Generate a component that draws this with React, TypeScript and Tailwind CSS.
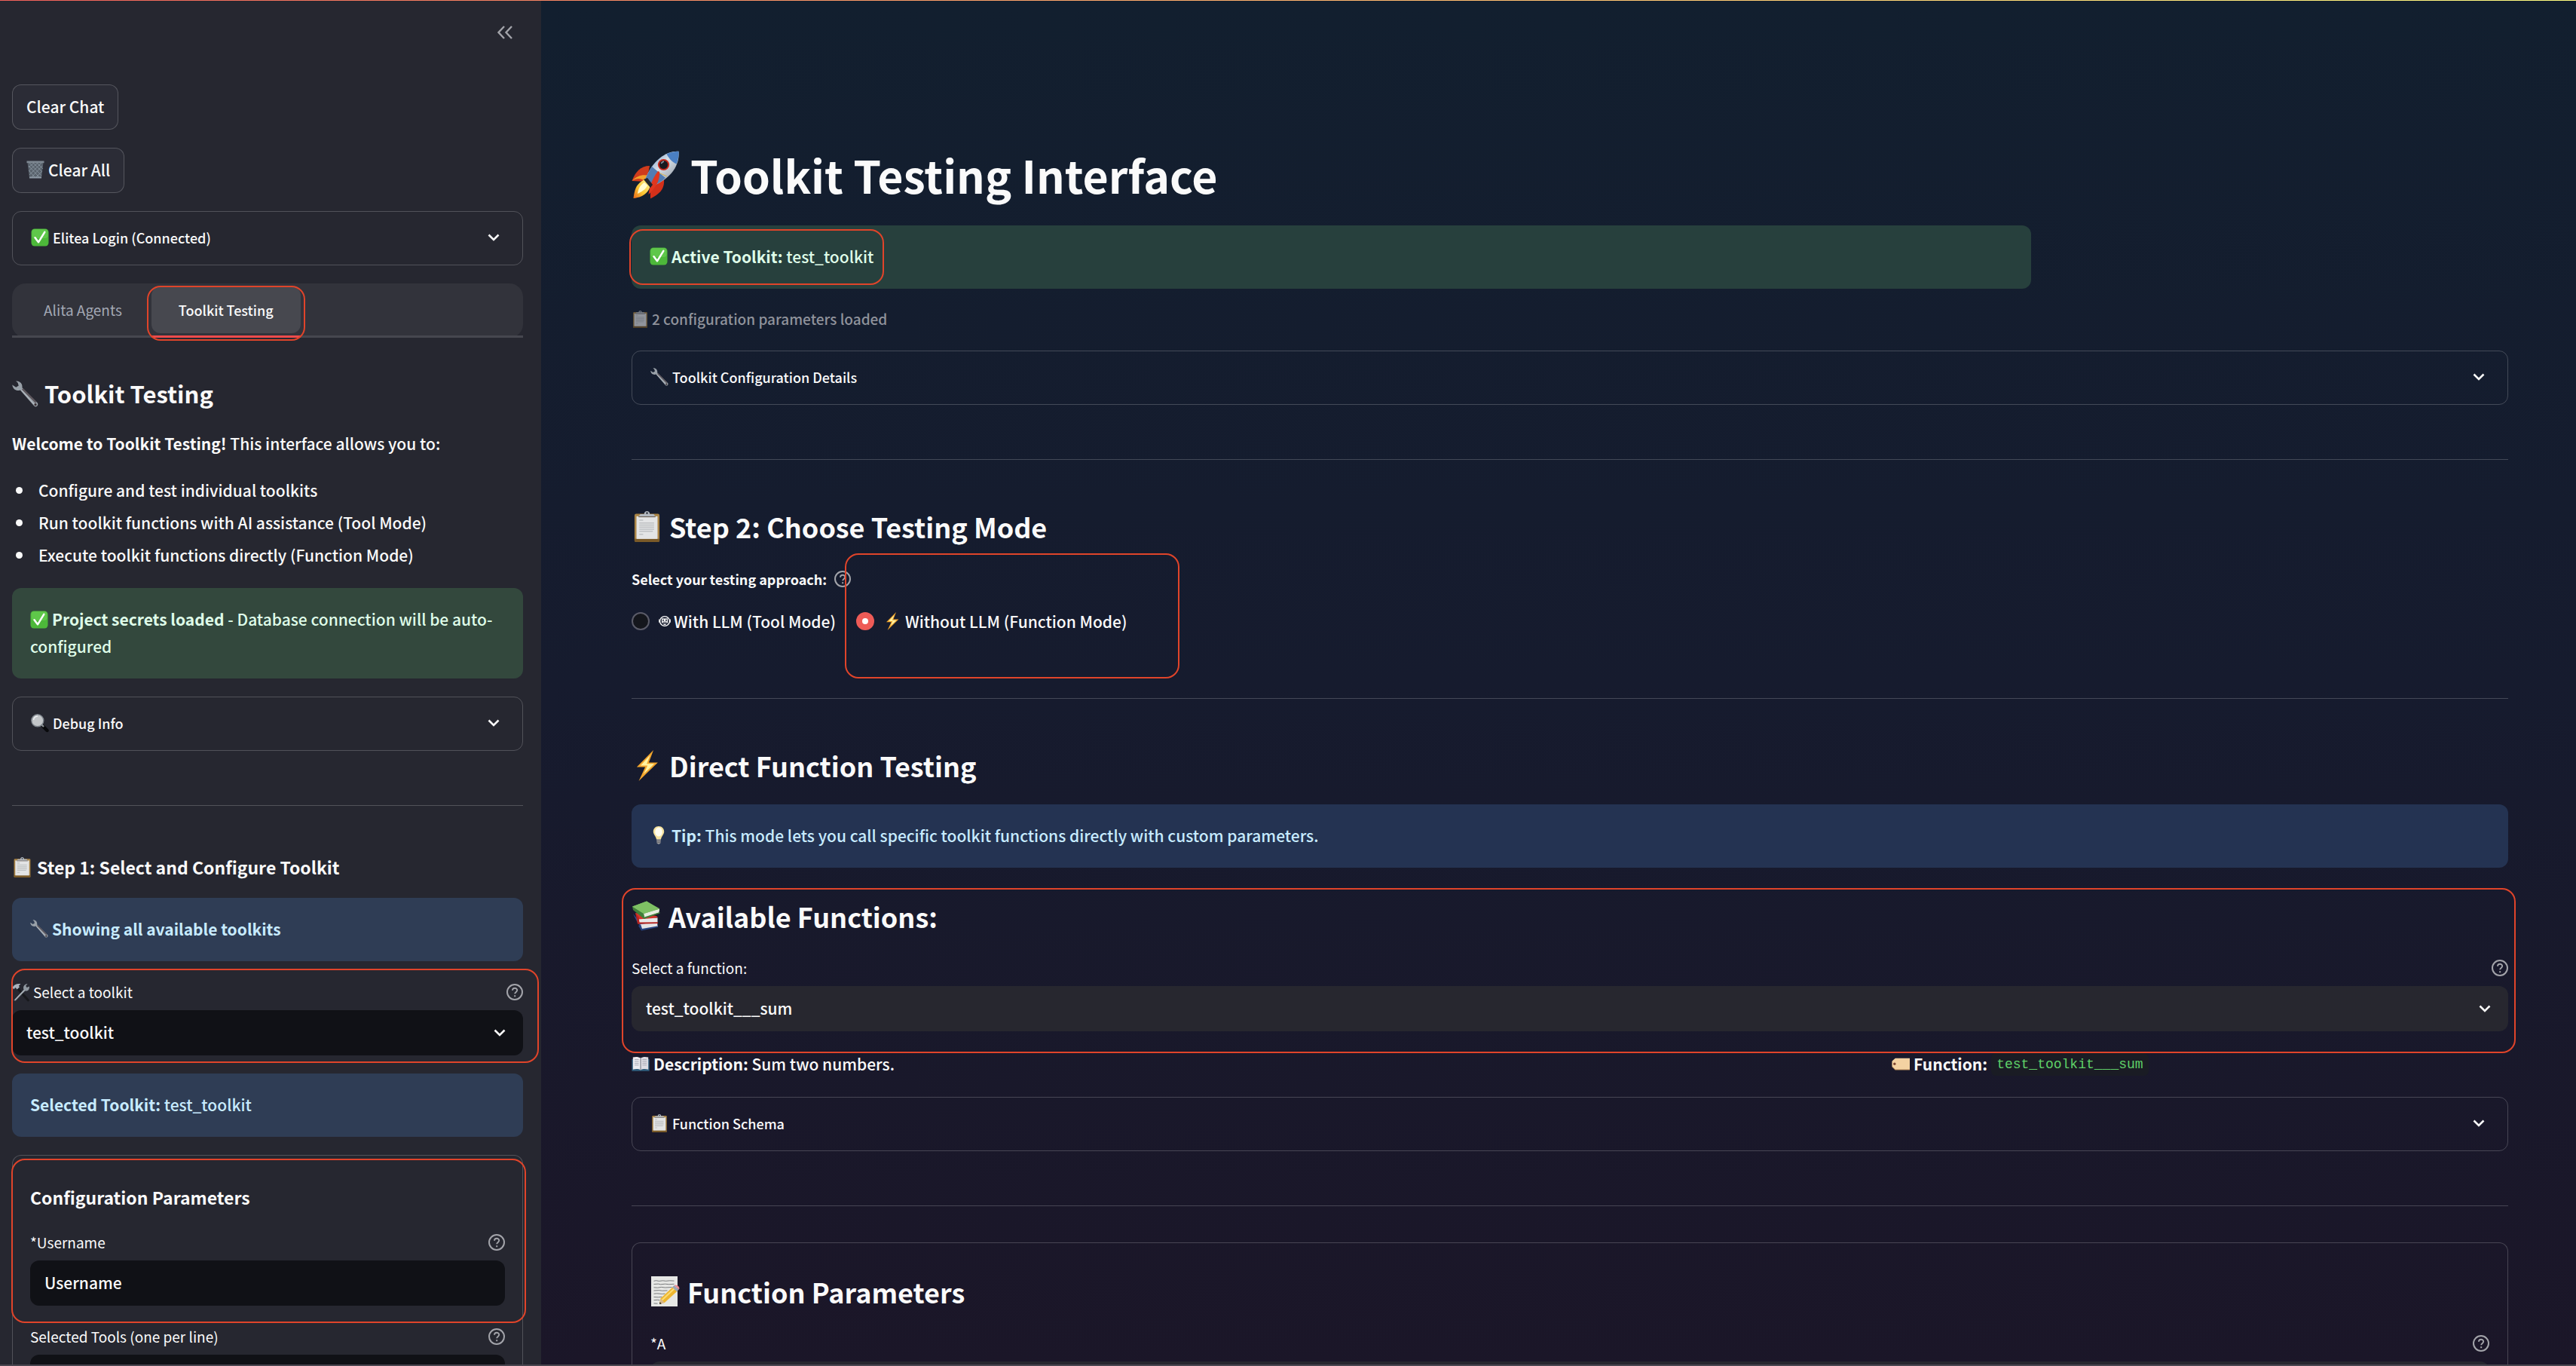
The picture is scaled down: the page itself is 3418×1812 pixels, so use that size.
import React, { useState } from "react";

type IconProps = { className?: string };

const glyph = "inline-block shrink-0 overflow-visible align-middle";

function Check({ className = "size-6" }: IconProps) {
  return (
    <svg viewBox="0 0 24 24" className={`${glyph} ${className}`} aria-hidden="true">
      <rect x="0.5" y="0.5" width="23" height="23" rx="4.5" fill="#4db83a" />
      <rect x="1.5" y="1" width="21" height="12" rx="4" fill="#6fd358" opacity="0.55" />
      <path d="M5.5 12.2 L10 18.3 L18.3 4.8" fill="none" stroke="#fff" strokeWidth="2.5" strokeLinecap="round" strokeLinejoin="round" />
    </svg>
  );
}

function Trash({ className = "size-6" }: IconProps) {
  return (
    <svg viewBox="0 0 24 24" className={`${glyph} ${className}`} aria-hidden="true">
      <path d="M1.5 2.5 L4 23 H20 L22.5 2.5 Z" fill="#59626c" />
      <path d="M3 7l14 15M4 14l8 9M4 3l16 17M9 3l12 12M14 3l8 8M21 7L7 22M20 15l-8 8M20 3L4 19M15 3L3 14M10 3L3 9" stroke="#8d99a5" strokeWidth="0.8" fill="none" />
      <path d="M4 21.5 H20 V23.5 H4 Z" fill="#8e9aa6" />
      <path d="M0.5 0.5 H23.5 V3.2 H0.5 Z" fill="#7d8791" />
    </svg>
  );
}

function Wrench({ className = "size-6" }: IconProps) {
  return (
    <svg viewBox="0 0 24 24" className={`${glyph} ${className}`} aria-hidden="true">
      <path d="M3.5 0.3 C6.5 0 9.8 2.2 9.2 6.4 L23 20 C24.6 22 22.2 24.6 20.2 23.2 L7.4 8.6 C4.6 9.8 0.6 8.2 0.2 3.8 L3.6 6 L6 4.4 L5.2 1.9 Z" fill="#98a0a8" />
      <path d="M9.5 7.5 L21.8 19.8" stroke="#5c555b" strokeWidth="1.6" />
      <path d="M8.6 8.6 L20 21.4" stroke="#c4c9cf" strokeWidth="0.6" />
      <circle cx="21.3" cy="21.7" r="1.1" fill="#3a2f33" />
    </svg>
  );
}

function Magnifier({ className = "size-6" }: IconProps) {
  return (
    <svg viewBox="0 0 24 24" className={`${glyph} ${className}`} aria-hidden="true">
      <path d="M16 16.4 L21.6 22" stroke="#08090b" strokeWidth="4.4" strokeLinecap="round" />
      <path d="M14 14 L17 17" stroke="#8b9097" strokeWidth="2.4" />
      <circle cx="8.8" cy="8.8" r="8" fill="#c3c6c9" stroke="#7e858c" strokeWidth="1.4" />
      <path d="M3.5 8 A6 6 0 0 1 9 3" stroke="#eceef0" strokeWidth="1.4" fill="none" />
    </svg>
  );
}

function Clipboard({ className = "size-6" }: IconProps) {
  return (
    <svg viewBox="0 0 24 24" className={`${glyph} ${className}`} aria-hidden="true">
      <rect x="2.3" y="2" width="19.4" height="22" rx="1.3" fill="#a98446" />
      <rect x="2.3" y="21.4" width="19.4" height="2.6" rx="1" fill="#7a5a28" />
      <rect x="3.8" y="4" width="16.4" height="17.6" fill="#e3e4e5" />
      <path d="M6 7h3M6 9.2h11.5M6 10.8h11.5M6 12.4h11.5M6 14h11.5M6 15.6h10.5M6 18h3" stroke="#bfc1c4" strokeWidth="0.9" />
      <path d="M5.4 4.4 L6.8 2.4 H9.8 C9.8 -0.8 14.2 -0.8 14.2 2.4 H17.2 L18.6 4.4 Z" fill="#b4bac2" />
      <circle cx="12" cy="1.6" r="0.8" fill="#3a3f48" />
      <path d="M5.4 4.4H18.6" stroke="#6d6257" strokeWidth="0.7" />
    </svg>
  );
}

function HammerWrench({ className = "size-6" }: IconProps) {
  return (
    <svg viewBox="0 0 24 24" className={`${glyph} ${className}`} aria-hidden="true">
      <path d="M6.5 6 L21.5 23" stroke="#17181c" strokeWidth="3" strokeLinecap="round" />
      <path d="M0.5 6 C2.5 2 6 0.4 11.5 1 L9 3.4 L9.8 5.6 L6.6 8.4 L4.6 6 L2.2 8.2 Z" fill="#a9b2bd" />
      <path d="M2.3 23 L15.5 8.8 C14 4.6 16.6 1.2 20.6 1 L18.2 3.8 L19.6 6 L22.8 4.4 C23.6 8.4 20.6 11.2 17.2 10.4 L4.6 23.6 Z" fill="#8f979f" />
      <path d="M4 22 L16.4 9.4" stroke="#c9ced4" strokeWidth="0.7" />
    </svg>
  );
}

function Rocket({ className = "size-16" }: IconProps) {
  return (
    <svg viewBox="0 0 64 64" className={`${glyph} ${className}`} aria-hidden="true">
      <defs>
        <linearGradient id="hull" x1="0" y1="0" x2="1" y2="1">
          <stop offset="0" stopColor="#4d83c4" />
          <stop offset="0.45" stopColor="#d9dfe6" />
          <stop offset="1" stopColor="#7e8894" />
        </linearGradient>
        <linearGradient id="flame" x1="1" y1="0" x2="0" y2="1">
          <stop offset="0" stopColor="#fff6a0" />
          <stop offset="0.6" stopColor="#fbc531" />
          <stop offset="1" stopColor="#e8661b" />
        </linearGradient>
      </defs>
      <path d="M24 20 C12 20 5 28 0.5 40 L20 41 Z" fill="#cf3b1c" />
      <path d="M0.5 40 C7 36 12 36 20 41 L23 33 C15 31 7 33 0.5 40 Z" fill="#f3a02a" />
      <path d="M43 38 C44 50 38 57 25 63.5 L25 45 Z" fill="#d4301a" />
      <path d="M20 37 C7 42 4 50 2.5 63 C12 62 22 58 25 46 Z" fill="url(#flame)" />
      <path d="M17 42 C11 46 9 50 8 57 C14 54 19 51 21 46 Z" fill="#fffbd0" />
      <path d="M62.5 0.8 C46 0 28 12 18 38 L28 47 C54 36 64 18 62.5 0.8 Z" fill="url(#hull)" />
      <path d="M62.5 0.8 C57 0.8 51 2 46.5 4.2 C50 11 54 15 59.5 17.5 C62 12 63 6 62.5 0.8 Z" fill="#4a7fc3" />
      <path d="M27 21 C23 27 20 33 18 38 L28 47 C34 44 40 41 45 36 Z" fill="#527cb3" />
      <path d="M36 29 L47 34" stroke="#d8b24a" strokeWidth="1" />
      <path d="M35 27 C27 38 24 47 22.5 58 C31 50 38 40 37 28 Z" fill="#e0371f" />
      <circle cx="42.5" cy="18.5" r="7.6" fill="#c6281c" />
      <circle cx="42.5" cy="18.5" r="5.6" fill="#17191f" />
      <path d="M39.5 17 A4 4 0 0 1 43 14.2" stroke="#8d98a8" strokeWidth="1.4" fill="none" />
      <path d="M16 38 L21 36 L28 45 L25 49 Z" fill="#20242c" />
    </svg>
  );
}

function Bolt({ className = "size-6" }: IconProps) {
  return (
    <svg viewBox="0 0 24 24" className={`${glyph} ${className}`} aria-hidden="true">
      <path d="M17 0 L4 13.2 H10.6 L5.6 24 L20.4 9.6 H13.4 Z" fill="#f2a52c" />
      <path d="M14.4 4 L7 12 H12.4 L9.4 18.6 L17.6 10.7 H11.8 Z" fill="#fff2a0" />
    </svg>
  );
}

function Bulb({ className = "size-6" }: IconProps) {
  return (
    <svg viewBox="0 0 24 24" className={`${glyph} ${className}`} aria-hidden="true">
      <path d="M12 0 C7.5 0 4.8 3.4 4.8 7 C4.8 11 8.6 13.4 9 17.6 H15 C15.4 13.4 19.2 11 19.2 7 C19.2 3.4 16.5 0 12 0 Z" fill="#f6e29c" />
      <ellipse cx="12" cy="7.6" rx="4.8" ry="6" fill="#fffdf0" />
      <path d="M9.2 17.4 H14.8 L14.4 22.4 L12 24 L9.6 22.4 Z" fill="#9b9c9f" />
      <path d="M9.4 19.4h5.2M9.6 21.4h4.8" stroke="#55565a" strokeWidth="0.8" />
    </svg>
  );
}

function Books({ className = "size-10" }: IconProps) {
  return (
    <svg viewBox="0 0 40 40" className={`${glyph} ${className}`} aria-hidden="true">
      <path d="M2 17 L8 29 L14 36 L35 34 L33 25 L10 27 Z" fill="#2c4f9e" />
      <path d="M11 31 L34 28 L34.5 34.5 L14 38.5 Z" fill="#e4e4e6" />
      <path d="M9 33 L13 39.5 L35 35 L34 33.6 L14 37 L12 31 Z" fill="#27427f" />
      <path d="M5 16 L33 20 L35 22 L9 27 Z" fill="#d1352b" />
      <path d="M9 24.5 L34.5 22.5 L34.5 28.5 L10.5 30 Z" fill="#e9e9ea" />
      <path d="M5 16 L8 30.8 L35 30 L35 28.2 L10.5 28.6 L9.5 22 Z" fill="#b4231f" />
      <path d="M1 7.5 L20 0.5 L37.5 12.5 L16 22 Z" fill="#67ae52" />
      <path d="M16 17 L37 10.5 L36.5 15.5 L17 22.5 Z" fill="#e7ecdf" />
      <path d="M1 7.5 L2 12 L16.5 24 L37.5 16.5 L37.5 15 L17 21.6 L16 16.6 Z" fill="#40803a" />
      <path d="M1 7.5 L20 0.5 L37.5 10.5 L16 17 Z" fill="#7ec064" />
    </svg>
  );
}

function OpenBook({ className = "size-6" }: IconProps) {
  return (
    <svg viewBox="0 0 24 24" className={`${glyph} ${className}`} aria-hidden="true">
      <path d="M0.4 5 H23.6 V20.8 H0.4 Z" fill="#2f5d7c" />
      <path d="M1.8 2.6 C5 1.6 9.6 1.8 12 3.6 V19.4 C9.6 17.8 5 17.8 1.8 18.8 Z" fill="#ececf0" />
      <path d="M22.2 2.6 C19 1.6 14.4 1.8 12 3.6 V19.4 C14.4 17.8 19 17.8 22.2 18.8 Z" fill="#dcdce3" />
      <path d="M4 5.6h5.6M4 8h5.6M4 10.4h5.6M4 12.8h5.6M14.4 5.6H20M14.4 8H20M14.4 10.4H20M14.4 12.8H20" stroke="#a9abb6" strokeWidth="1" />
      <path d="M12 3.6V19.6" stroke="#6a6e7c" strokeWidth="1" />
    </svg>
  );
}

function Tag({ className = "size-6" }: IconProps) {
  return (
    <svg viewBox="0 0 24 24" className={`${glyph} ${className}`} aria-hidden="true">
      <path d="M4.6 4.4 H24 V19.4 H4.6 L0.6 15.6 V8.2 Z" fill="#b88b5a" />
      <path d="M4.8 3.8 H24 V18.4 H4.8 L0.6 14.6 V7.6 Z" fill="#f3d2a2" />
      <circle cx="3.8" cy="11.2" r="1.7" fill="#7d4632" />
    </svg>
  );
}

function Memo({ className = "size-10" }: IconProps) {
  return (
    <svg viewBox="0 0 40 40" className={`${glyph} ${className}`} aria-hidden="true">
      <rect x="1" y="0" width="35" height="40" fill="#e6e7e5" />
      <path d="M4.5 6.3l3-.6 4 .7 5-.6 4 .5 5-.5 6 .3M4.5 10.5l6-.4 3 .7 6-.6 5 .5 7-.4M4.5 14.8l5 .4 5-.8 5 .6 9-.5M4.5 19l7-.4 4 .6 7-.3M4.5 23.2l4-.4 7 .6 4-.3M4.5 27.5l6 .3 5-.5M4.5 31.7l5-.4 3 .5M4.5 35.9l5 .3" stroke="#6d6f72" strokeWidth="0.9" fill="none" />
      <path d="M12 37 L13.4 29.6 L30.4 13.4 L36.4 19 L18.8 35 Z" fill="#eeb62f" />
      <path d="M15.5 31.6 L32.6 15.4" stroke="#fbdc74" strokeWidth="2" />
      <path d="M12 37 L13.4 29.6 L18.8 35 Z" fill="#d9b98c" />
      <path d="M12 37 L12.6 34 L14.8 36.2 Z" fill="#2b2725" />
      <path d="M29 14.6 L31.6 12 L37.8 17.6 L35 20.2 Z" fill="#9aa7b5" />
      <path d="M31.6 12 C34 9.8 40.4 14.4 37.8 17.6 Z" fill="#ea8c93" />
    </svg>
  );
}

function Robot({ className = "size-4" }: IconProps) {
  return (
    <svg viewBox="0 0 16 16" className={`${glyph} ${className}`} aria-hidden="true">
      <circle cx="8" cy="8" r="6.4" fill="none" stroke="#fafafa" strokeWidth="1.4" />
      <path d="M0.8 5.6v4.2M15.2 5.6v4.2" stroke="#fafafa" strokeWidth="1.3" />
      <path d="M4 4.4 H12 V10.4 H4 Z" fill="#fafafa" />
      <circle cx="6" cy="6.8" r="1" fill="#161b2e" />
      <circle cx="10" cy="6.8" r="1" fill="#161b2e" />
      <path d="M5.4 9.2h5.2" stroke="#161b2e" strokeWidth="0.8" />
      <path d="M6.4 12.4h3.2" stroke="#fafafa" strokeWidth="1.4" />
    </svg>
  );
}

function Chevron({ className = "" }: IconProps) {
  return (
    <svg viewBox="0 0 16 10" className={`h-[10px] w-4 shrink-0 ${className}`} aria-hidden="true">
      <path d="M1.5 1.5 L8 8 L14.5 1.5" fill="none" stroke="#fafafa" strokeWidth="2.6" />
    </svg>
  );
}

function Help({ label }: { label: string }) {
  return (
    <button type="button" aria-label={label} className="size-[22px] shrink-0">
      <svg viewBox="0 0 22 22" className="size-[22px]" fill="none" stroke="#a3a4aa" aria-hidden="true">
        <circle cx="11" cy="11" r="10" strokeWidth="2" />
        <path d="M8 8.8 C8 4.8 14.2 4.9 14.2 8.6 C14.2 10.9 11.2 10.9 11.2 13.2" strokeWidth="1.9" />
        <path d="M11.2 15.2 V17.2" strokeWidth="2" />
      </svg>
    </button>
  );
}

function Callout({ className }: { className: string }) {
  return <div aria-hidden="true" className={`pointer-events-none absolute z-10 rounded-[18px] border-2 border-[#e0442a] ${className}`} />;
}

function Expander({ icon, title }: { icon: React.ReactNode; title: string }) {
  return (
    <button type="button" aria-expanded="false" className="flex h-[72px] w-full items-center rounded-xl border border-white/20 pr-[30px] pb-[3px] pl-6 text-left text-[18px] font-medium">
      <span className="mr-[5px] flex">{icon}</span>
      <span className="flex-1">{title}</span>
      <Chevron />
    </button>
  );
}

function SelectBox({ id, value, tone }: { id: string; value: string; tone: string }) {
  return (
    <div className="relative">
      <select id={id} defaultValue={value} className={`h-[60px] w-full appearance-none rounded-xl pr-14 pb-[3px] pl-[19px] leading-9 outline-none ${tone}`}>
        <option>{value}</option>
      </select>
      <Chevron className="pointer-events-none absolute top-[25px] right-[23px]" />
    </div>
  );
}

function FieldLabel({ htmlFor, help, children }: { htmlFor: string; help: string; children: React.ReactNode }) {
  return (
    <div className="mb-[5px] flex h-9 items-center justify-between pb-[2px] text-[19px] font-normal">
      <label htmlFor={htmlFor} className="flex items-center gap-[4px]">
        {children}
      </label>
      <Help label={help} />
    </div>
  );
}

function Heading({ icon, children }: { icon: React.ReactNode; children: React.ReactNode }) {
  return (
    <h2 className="flex items-center gap-[9px] pt-[15px] pb-[3px] text-[36px] leading-[50px] font-bold">
      {icon}
      {children}
    </h2>
  );
}

function Divider() {
  return <hr className="mt-12 mb-6 border-t border-white/20" />;
}

function Sidebar() {
  return (
    <aside className="w-[718px] shrink-0 overflow-hidden bg-[#262730] pr-6 pl-4">
      <div className="flex h-28 items-start justify-end pt-8 pr-[13px]">
        <button type="button" aria-label="Collapse sidebar" className="h-6 w-[22px]">
          <svg viewBox="0 0 22 24" className="h-6 w-[22px]" fill="none" stroke="#a3a4aa" strokeWidth="2.4" aria-hidden="true">
            <path d="M10 3 L2.5 11 L10 19 M20 3 L12.5 11 L20 19" />
          </svg>
        </button>
      </div>
      <div className="flex flex-col items-stretch gap-6">
        <button type="button" className="h-[60px] self-start rounded-xl border border-white/20 bg-[#2b2c36] px-[18px] pb-[2px]">
          Clear Chat
        </button>
        <button type="button" className="flex h-[60px] items-center gap-[5px] self-start rounded-xl border border-white/20 bg-[#2b2c36] px-[18px] pb-[2px]">
          <Trash />
          Clear All
        </button>
        <Expander icon={<Check />} title="Elitea Login (Connected)" />
        <div role="tablist" className="relative flex h-[72px] items-start gap-[3px] rounded-[18px] bg-[#32333b] px-[6px] pt-1">
          <div className="absolute inset-x-0 bottom-0 h-[3px] bg-[#46474f]" />
          <button role="tab" aria-selected="false" type="button" className="h-[62px] px-9 text-[19px] font-normal text-[#a3a8b4]">
            Alita Agents
          </button>
          <div className="relative">
            <button role="tab" aria-selected="true" type="button" className="h-[62px] rounded-xl bg-[#47484f] px-9 text-[18px]">
              Toolkit Testing
            </button>
            <div className="absolute inset-x-0 top-[65px] h-[3px] bg-[#ff4b4b]/90" />
            <Callout className="-inset-x-[6px] -top-[1px] h-[73px]" />
          </div>
        </div>
        <h3 className="flex h-[74px] items-center gap-[8px] pt-[26px] text-[31px] leading-[46px] font-bold">
          <Wrench className="size-[35px]" />
          Toolkit Testing
        </h3>
        <p>
          <strong>Welcome to Toolkit Testing!</strong> This interface allows you to:
        </p>
        <ul className="flex flex-col gap-[7px] py-[2px]">
          {[
            "Configure and test individual toolkits",
            "Run toolkit functions with AI assistance (Tool Mode)",
            "Execute toolkit functions directly (Function Mode)",
          ].map((t) => (
            <li key={t} className="flex items-center">
              <span className="mr-[21px] ml-[5px] size-[9px] rounded-full bg-[#fafafa]" />
              {t}
            </li>
          ))}
        </ul>
        <div role="status" className="rounded-xl bg-[#33483d] px-6 pt-[23px] pb-[25px] text-[#dffde9]">
          <Check className="-mt-[5px] mr-[5px] size-6" />
          <strong>Project secrets loaded</strong> - Database connection will be auto-configured
        </div>
        <Expander icon={<Magnifier />} title="Debug Info" />
        <Divider />
        <h4 className="flex items-center gap-[6px] pt-4 text-[23px] leading-[34px] font-bold">
          <Clipboard className="size-[27px]" />
          Step 1: Select and Configure Toolkit
        </h4>
        <div role="status" className="flex items-center gap-[5px] rounded-xl bg-[#2f3d55] px-6 pt-[23px] pb-[25px] font-bold text-[#c7ebff]">
          <Wrench />
          Showing all available toolkits
        </div>
        <div className="relative">
          <FieldLabel htmlFor="toolkit" help="About toolkits">
            <HammerWrench />
            Select a toolkit
          </FieldLabel>
          <SelectBox id="toolkit" value="test_toolkit" tone="bg-[#101116]" />
          <Callout className="-top-[14px] -right-[21px] -bottom-[10px] -left-[1px]" />
        </div>
        <div role="status" className="rounded-xl bg-[#2f3d55] px-6 pt-[23px] pb-[25px] text-[#c7ebff]">
          <strong>Selected Toolkit:</strong> test_toolkit
        </div>
        <form className="relative flex flex-col gap-6 rounded-t-xl border border-b-0 border-white/20 px-[23px] pt-6">
          <Callout className="top-1 -right-[5px] -left-[2px] h-[218px]" />
          <h4 className="pt-[14px] pb-[2px] text-[23px] leading-[34px] font-bold">Configuration Parameters</h4>
          <div>
            <FieldLabel htmlFor="username" help="About username">
              *Username
            </FieldLabel>
            <input id="username" type="text" defaultValue="Username" className="h-[60px] w-full rounded-xl bg-[#101116] px-[19px] pb-[2px] outline-none" />
          </div>
          <div>
            <FieldLabel htmlFor="tools" help="About selected tools">
              Selected Tools (one per line)
            </FieldLabel>
            <textarea id="tools" className="block h-[120px] w-full resize-none rounded-xl bg-[#101116] outline-none" />
          </div>
        </form>
      </div>
    </aside>
  );
}

function ModeOption({ id, checked, onSelect, children }: { id: string; checked: boolean; onSelect: () => void; children: React.ReactNode }) {
  return (
    <label htmlFor={id} className="flex h-9 items-center">
      <input
        id={id}
        type="radio"
        name="mode"
        checked={checked}
        onChange={onSelect}
        className="mr-3 size-6 appearance-none rounded-full border-2 border-[#5a5b68] bg-[#14161c] checked:border-8 checked:border-[#ee5b57] checked:bg-white"
      />
      {children}
    </label>
  );
}

function Main() {
  const [mode, setMode] = useState("function");
  return (
    <main className="min-w-0 flex-1 overflow-hidden bg-linear-to-b from-[#121f2f] via-[#161b2e] to-[#1b1628] pr-[90px] pl-[120px]">
      <div className="flex flex-col gap-6 pt-48">
        <h1 className="flex items-center gap-[14px] pb-[3px] text-[59px] leading-[80px] font-bold">
          <Rocket />
          Toolkit Testing Interface
        </h1>
        <div className="grid grid-cols-[3fr_1fr] gap-[14px]">
          <div role="status" className="relative flex items-center gap-[5px] rounded-xl bg-[#27403d] px-6 pt-[23px] pb-[25px] text-[#dffde9]">
            <Check />
            <span>
              <strong>Active Toolkit:</strong> test_toolkit
            </span>
            <Callout className="top-[5px] -left-[3px] h-[74px] w-[338px]" />
          </div>
        </div>
        <p className="flex items-center gap-[4px] pb-[2px] text-[19px] leading-8 text-[#8f929b]">
          <Clipboard className="size-[23px] opacity-60" />
          <span>2 configuration parameters loaded</span>
        </p>
        <Expander icon={<Wrench />} title="Toolkit Configuration Details" />
        <Divider />
        <Heading icon={<Clipboard className="size-[41px]" />}>Step 2: Choose Testing Mode</Heading>
        <div role="radiogroup" aria-labelledby="mode-label" className="pb-3">
          <div className="mb-5 flex h-9 items-center gap-[10px] text-[18px] font-bold">
            <span id="mode-label">Select your testing approach:</span>
            <Help label="About testing modes" />
          </div>
          <div className="flex gap-[27px]">
            <ModeOption id="tool" checked={mode === "tool"} onSelect={() => setMode("tool")}>
              <Robot className="mr-[4px] size-4" />
              With LLM (Tool Mode)
            </ModeOption>
            <div className="relative">
              <ModeOption id="function" checked={mode === "function"} onSelect={() => setMode("function")}>
                <Bolt className="mr-[5px] size-6" />
                Without LLM (Function Mode)
              </ModeOption>
              <Callout className="-top-[72px] -left-[15px] h-[166px] w-[444px]" />
            </div>
          </div>
        </div>
        <Divider />
        <Heading icon={<Bolt className="size-[41px]" />}>Direct Function Testing</Heading>
        <div role="status" className="flex items-center gap-[5px] rounded-xl bg-[#243352] px-6 pt-[23px] pb-[25px] text-[#c7ebff]">
          <Bulb />
          <span>
            <strong>Tip:</strong> This mode lets you call specific toolkit functions directly with custom parameters.
          </span>
        </div>
        <section className="relative flex flex-col gap-6">
          <Heading icon={<Books />}>Available Functions:</Heading>
          <div>
            <FieldLabel htmlFor="fn" help="About functions">
              Select a function:
            </FieldLabel>
            <SelectBox id="fn" value="test_toolkit___sum" tone="bg-[#27272f]" />
          </div>
          <Callout className="top-[3px] -right-[10px] -bottom-[29px] -left-[13px]" />
        </section>
        <div className="grid grid-cols-[2fr_1fr] gap-9 leading-[39px]">
          <p className="flex items-center gap-[5px]">
            <OpenBook />
            <span>
              <strong>Description:</strong> Sum two numbers.
            </span>
          </p>
          <p className="flex items-center gap-[5px]">
            <Tag />
            <strong>Function:</strong>
            <code className="rounded-md bg-[#1a1c24] px-[7px] font-['Liberation_Mono',monospace] text-[18px] leading-[30px] font-normal text-[#5fd068]">test_toolkit___sum</code>
          </p>
        </div>
        <Expander icon={<Clipboard />} title="Function Schema" />
        <Divider />
        <form className="flex flex-col gap-6 rounded-t-xl border border-b-0 border-white/20 px-6 pt-6">
          <Heading icon={<Memo />}>Function Parameters</Heading>
          <div>
            <FieldLabel htmlFor="a" help="About parameter A">
              *A
            </FieldLabel>
            <input id="a" type="text" className="h-[60px] w-full rounded-xl bg-[#27272f] px-[19px] outline-none" />
          </div>
        </form>
      </div>
    </main>
  );
}

export default function App() {
  return (
    <div className="relative flex h-screen overflow-hidden bg-[#262730] font-['Noto_Sans_CJK_SC','Noto_Sans',sans-serif] text-[21px] leading-9 font-medium text-[#fafafa]">
      <Sidebar />
      <Main />
      <div className="absolute inset-x-0 top-0 h-px bg-linear-to-r from-[#f0605a] to-[#fffd80]" />
      <div className="absolute inset-x-0 bottom-0 h-[2px] bg-[#4a4650]" />
    </div>
  );
}
